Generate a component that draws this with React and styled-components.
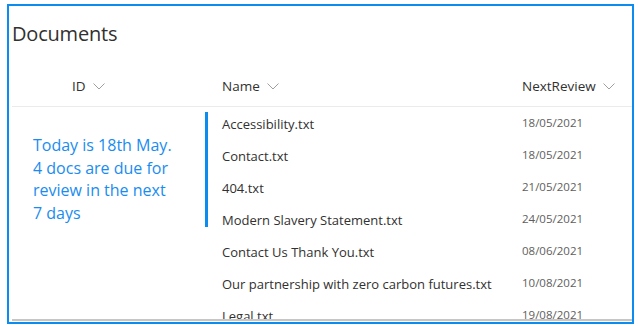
import React from "react";
import styled, { createGlobalStyle } from "styled-components";

const GlobalStyle = createGlobalStyle`
  html, body {
    margin: 0;
    padding: 0;
    background: #fff;
    font-family: "Open Sans", "Noto Sans", sans-serif;
  }
`;

const docs = [
  { name: "Accessibility.txt", review: "18/05/2021" },
  { name: "Contact.txt", review: "18/05/2021" },
  { name: "404.txt", review: "21/05/2021" },
  { name: "Modern Slavery Statement.txt", review: "24/05/2021" },
  { name: "Contact Us Thank You.txt", review: "08/06/2021" },
  { name: "Our partnership with zero carbon futures.txt", review: "10/08/2021" },
  { name: "Legal.txt", review: "19/08/2021" },
];

const noteLines = ["Today is 18th May.", "4 docs are due for", "review in the next", "7 days"];

const Chevron = () => (
  <svg width="12" height="7" viewBox="0 0 12 7" fill="none">
    <polyline points="0.5,0.5 6,6 11.5,0.5" stroke="#a19f9d" strokeWidth="1" />
  </svg>
);

const App = () => (
  <Page>
    <GlobalStyle />
    <Frame>
      <Title>Documents</Title>
      <HeaderRow>
        <HeaderCell $indent={63}>
          ID <Chevron />
        </HeaderCell>
        <HeaderCell $indent={17}>
          Name <Chevron />
        </HeaderCell>
        <HeaderCell $indent={0}>
          NextReview <Chevron />
        </HeaderCell>
      </HeaderRow>
      <Body>
        <Note>
          {noteLines.map((l) => (
            <NoteLine key={l}>{l}</NoteLine>
          ))}
        </Note>
        <Rows>
          {docs.map((d) => (
            <Row key={d.name}>
              <Name>{d.name}</Name>
              <Date>{d.review}</Date>
            </Row>
          ))}
        </Rows>
      </Body>
    </Frame>
  </Page>
);

const Page = styled.div`
  padding: 4px 4px 0 7px;
`;

const Frame = styled.div`
  width: 627px;
  height: 320px;
  box-sizing: border-box;
  border: 2px solid #0d8cf0;
  display: flex;
  flex-direction: column;
  overflow: hidden;
`;

const Title = styled.h1`
  margin: 0;
  height: 59px;
  padding: 14px 0 0 3px;
  box-sizing: border-box;
  font-size: 20px;
  font-weight: 400;
  color: #323130;
  letter-spacing: -0.2px;
`;

const HeaderRow = styled.div`
  display: grid;
  grid-template-columns: 196px 314px 1fr;
  height: 42px;
  margin-left: 3px;
  border-bottom: 1px solid #edebe9;
  box-sizing: border-box;
`;

const HeaderCell = styled.div`
  display: flex;
  align-items: center;
  gap: 7px;
  padding-left: ${(p) => Math.max(p.$indent - 3, 0)}px;
  font-size: 13.5px;
  color: #323130;
  svg {
    margin-top: 1px;
  }
`;

const Body = styled.div`
  flex: 1;
  display: flex;
  overflow: hidden;
  margin-left: 3px;
  border-bottom: 2px solid #c8c6c4;
  margin-bottom: 1px;
`;

const Note = styled.div`
  width: 196px;
  height: 115px;
  margin-top: 5px;
  box-sizing: border-box;
  flex-shrink: 0;
  padding: 22px 0 0 21px;
  border-right: 3px solid #0d8cf0;
  font-size: 16px;
  line-height: 22.5px;
  color: #1a8cf0;
`;

const NoteLine = styled.div`
  white-space: nowrap;
`;

const Rows = styled.div`
  flex: 1;
  display: flex;
  flex-direction: column;
  padding-top: 1px;
`;

const Row = styled.div`
  display: grid;
  grid-template-columns: 314px 1fr;
  height: 32px;
  flex-shrink: 0;
  align-items: center;
`;

const Name = styled.span`
  padding-left: 14px;
  font-size: 13px;
  color: #323130;
  white-space: nowrap;
`;

const Date = styled.span`
  font-size: 11.5px;
  color: #605e5c;
  margin-top: -4px;
`;

export default App;
